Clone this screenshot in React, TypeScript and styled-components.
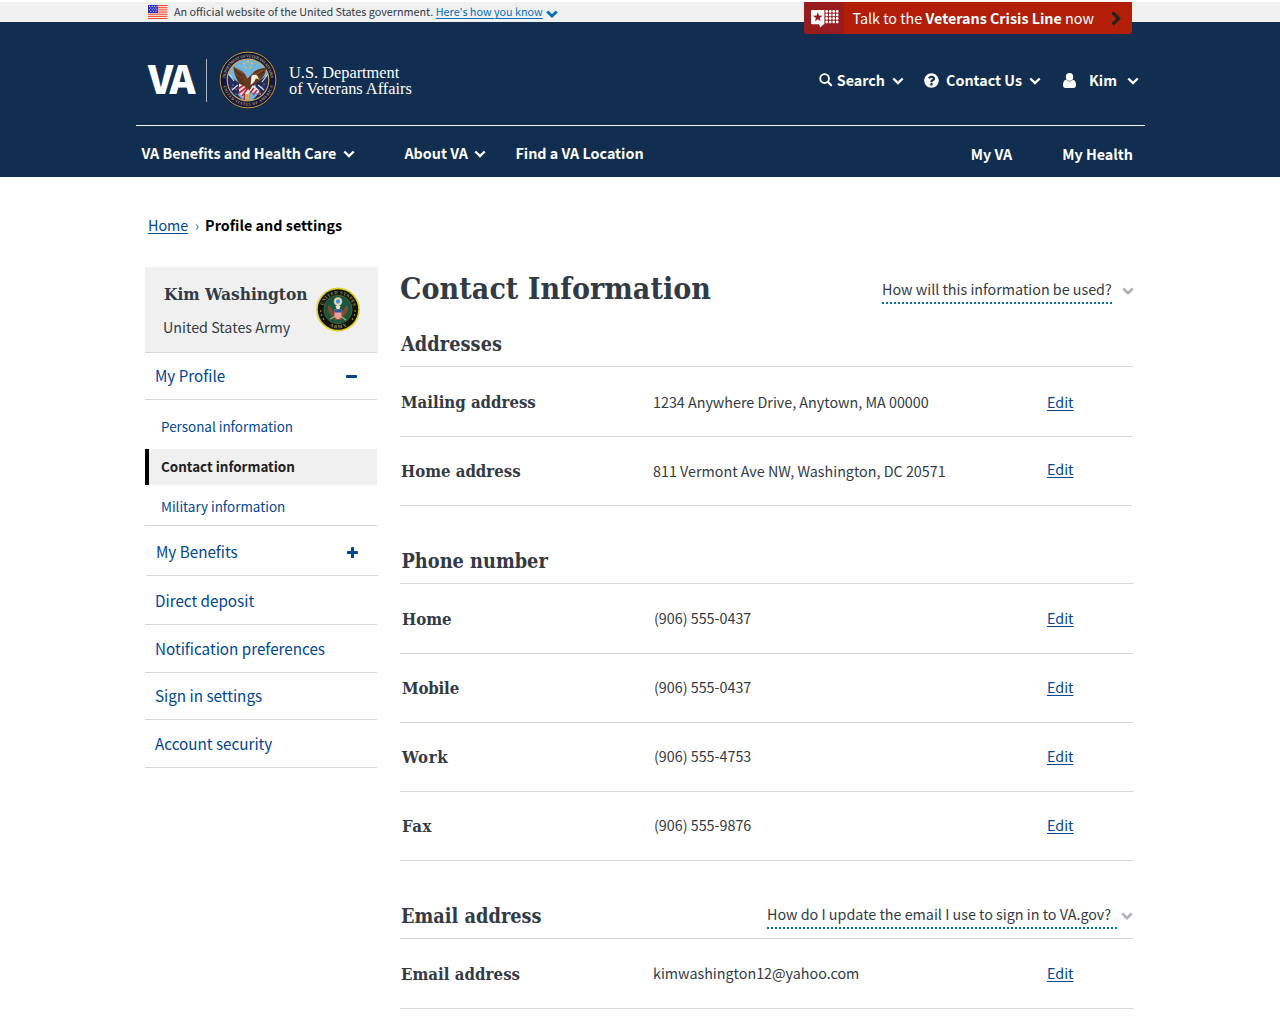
import React from 'react';
import styled, { createGlobalStyle } from 'styled-components';
import { FaQuestionCircle } from 'react-icons/fa';

const SANS = '"Noto Sans CJK JP", "Open Sans", sans-serif';
const SLAB = '"DejaVu Serif Condensed", "DejaVu Serif", serif';
const NAVY = '#112e51';
const INK = '#323a45';
const LINK = '#004795';
const RULE = '#d6d7d9';

const GlobalStyle = createGlobalStyle`
  * { box-sizing: border-box; }
  body { margin: 0; background: #fff; color: ${INK}; font-family: ${SANS}; }
  a { color: inherit; text-decoration: none; }
  h1, h2, h3, p, ul, dl, dt, dd { margin: 0; padding: 0; list-style: none; }
  svg { display: block; flex: none; }
`;

const Page = styled.div`
  width: 1280px;
  height: 1026px;
  overflow: hidden;
  position: relative;
`;

/* ---------- government banner ---------- */

const GovBanner = styled.div`
  margin-top: 2px;
  height: 20px;
  padding-left: 148px;
  background: #f0f0f0;
  display: flex;
  align-items: flex-start;
`;

const FlagSlot = styled.span`
  margin: 3px 6px 0 0;
`;

const BannerText = styled.span`
  margin-top: 2px;
  font-size: 10.8px;
  line-height: 15px;
  white-space: pre;
`;

const BannerLink = styled.a`
  margin: 2px 3px 0 2.5px;
  color: #0071bb;
  font-size: 10.8px;
  line-height: 15px;
  text-decoration: underline;
  text-decoration-thickness: 1px;
  text-underline-offset: 2px;
`;

const BannerChevron = styled.span`
  margin-top: 7.5px;
`;

const CrisisLine = styled.a`
  position: absolute;
  left: 804px;
  top: 2px;
  width: 328px;
  height: 32px;
  display: flex;
  background: #b31e09;
  border-radius: 0 0 3px 3px;
  overflow: hidden;
  color: #fff;
  font-size: 14.32px;
  line-height: 21px;
`;

const CrisisIcon = styled.span`
  width: 40px;
  background: #981b1e;
  padding: 7px 0 0 7px;
`;

const CrisisText = styled.span`
  width: 267px;
  padding: 5px 0 0 8.5px;
  white-space: pre;
`;

const CrisisChevron = styled.span`
  padding-top: 9px;
`;

/* ---------- header ---------- */

const Header = styled.header`
  height: 155px;
  padding-left: 136px;
  background: ${NAVY};
  color: #fff;
`;

const HeaderTop = styled.div`
  width: 1009px;
  height: 104px;
  border-bottom: 1px solid #f4f6f8;
  display: flex;
  justify-content: space-between;
  align-items: flex-start;
`;

const Brand = styled.div`
  display: flex;
  align-items: flex-start;
  padding-left: 12px;
`;

const BrandMark = styled.span`
  width: 58px;
  margin-top: 26px;
  font-size: 39.4px;
  font-weight: 900;
  line-height: 57px;
  letter-spacing: -3px;
`;

const BrandDivider = styled.span`
  width: 1px;
  height: 43px;
  margin: 37px 12px 0 0;
  background: #a9b4c2;
`;

const SealSlot = styled.span`
  margin: 29px 12px 0 0;
`;

const BrandName = styled.span`
  margin-top: 43px;
  font-family: "Liberation Serif", serif;
  font-size: 16.35px;
  line-height: 16px;
  white-space: pre;
`;

const Tools = styled.div`
  display: flex;
  align-items: center;
  height: 21px;
  margin: 47px 6.5px 0 0;
  font-size: 14.32px;
  font-weight: 700;
  line-height: 21px;
`;

const Tool = styled.a<{ $lead: number }>`
  display: flex;
  align-items: center;
  margin-left: ${(p) => p.$lead}px;
`;

const ToolLabel = styled.span<{ $left: number; $right: number }>`
  margin: 0 ${(p) => p.$right}px 0 ${(p) => p.$left}px;
`;

const Lowered = styled.span<{ $by: number }>`
  padding-top: ${(p) => p.$by}px;
`;

const Nav = styled.nav`
  width: 997px;
  display: flex;
  align-items: flex-start;
  padding-left: 5.4px;
  font-size: 14.32px;
  font-weight: 700;
  line-height: 21px;
`;

const NavItem = styled.a<{ $gap: number; $top?: number }>`
  display: flex;
  align-items: center;
  gap: 6.5px;
  margin: ${(p) => p.$top ?? 16}px ${(p) => p.$gap}px 0 0;
`;

const NavSpacer = styled.span`
  flex: 1;
`;

/* ---------- breadcrumb ---------- */

const Breadcrumb = styled.nav`
  height: 90px;
  padding: 37px 0 0 148px;
  display: flex;
  align-items: flex-start;
  font-size: 14.32px;
  line-height: 21px;
`;

const UnderlinedLink = styled.a`
  color: ${LINK};
  text-decoration: underline;
  text-decoration-thickness: 1px;
  text-underline-offset: 2px;
`;

const CrumbMark = styled.span`
  margin: 0 6px 0 6.5px;
  color: #4773aa;
`;

const CrumbHere = styled.span`
  color: #000;
  font-weight: 700;
  letter-spacing: 0.03px;
`;

/* ---------- sidebar ---------- */

const Body = styled.div`
  display: flex;
  align-items: flex-start;
  padding-left: 145px;
`;

const Sidebar = styled.aside`
  width: 255px;
`;

const ProfileCard = styled.div`
  width: 233px;
  height: 85px;
  padding-left: 18px;
  background: #f0f0f0;
  display: flex;
  align-items: flex-start;
  justify-content: space-between;
`;

const ProfileText = styled.div`
  padding-top: 17px;
`;

const ProfileName = styled.h2`
  padding-left: 1px;
  font-family: ${SLAB};
  font-size: 17.2px;
  line-height: 20px;
  font-weight: 700;
  white-space: nowrap;
`;

const ProfileBranch = styled.p`
  margin-top: 12px;
  font-size: 14.32px;
  line-height: 21px;
`;

const ArmySlot = styled.span`
  margin: 20px 18px 0 0;
`;

const SideRow = styled.a<{ $h: number; $top: number; $shift?: number }>`
  display: flex;
  justify-content: space-between;
  align-items: flex-start;
  width: 232px;
  height: ${(p) => p.$h}px;
  margin-left: ${(p) => p.$shift ?? 0}px;
  padding: ${(p) => p.$top}px 20px 0 10px;
  border-bottom: 1px solid ${RULE};
  color: ${LINK};
  font-size: 15.22px;
  line-height: 22px;
`;

const CardRule = styled.div`
  width: 232px;
  height: 1px;
  background: ${RULE};
`;

const SubList = styled.ul`
  width: 232px;
  height: 126px;
  border-bottom: 1px solid ${RULE};
`;

const SubItem = styled.li<{ $h: number; $top: number; $active?: boolean }>`
  height: ${(p) => p.$h}px;
  padding: ${(p) => p.$top}px 0 0 12px;
  border-left: 4px solid ${(p) => (p.$active ? '#000' : 'transparent')};
  background: ${(p) => (p.$active ? '#f0f0f0' : 'none')};
  color: ${(p) => (p.$active ? '#212121' : LINK)};
  font-weight: ${(p) => (p.$active ? 700 : 400)};
  font-size: 13.43px;
  line-height: 20px;
`;

/* ---------- main column ---------- */

const Main = styled.main`
  width: 733px;
`;

const TitleRow = styled.div`
  display: flex;
  justify-content: space-between;
  align-items: flex-start;
  height: 60px;
`;

const Title = styled.h1`
  margin: 4px 0 0 0;
  font-family: ${SLAB};
  font-size: 30px;
  line-height: 35px;
  font-weight: 700;
  letter-spacing: 0.06px;
`;

const Help = styled.a<{ $top: number; $right: number }>`
  display: flex;
  align-items: flex-start;
  margin: ${(p) => p.$top}px ${(p) => p.$right}px 0 0;
`;

const HelpText = styled.span<{ $w: number; $gap: number }>`
  width: ${(p) => p.$w}px;
  margin-right: ${(p) => p.$gap}px;
  padding-bottom: 3px;
  border-bottom: 2px dotted #0071bb;
  font-size: 14.32px;
  line-height: 21px;
  white-space: nowrap;
`;

const Section = styled.section`
  & + & { margin-top: 38px; }
`;

const SectionHead = styled.div`
  display: flex;
  justify-content: space-between;
  align-items: flex-start;
  height: 40px;
  border-bottom: 1px solid ${RULE};
`;

const SectionTitle = styled.h2<{ $left: number; $track: number }>`
  margin: 5px 0 0 ${(p) => p.$left}px;
  font-family: ${SLAB};
  font-size: 19.75px;
  line-height: 24px;
  font-weight: 700;
  letter-spacing: ${(p) => p.$track}px;
`;

const Row = styled.dl<{ $h: number; $w: number }>`
  display: grid;
  grid-template-columns: 253px 394px auto;
  justify-content: start;
  align-items: start;
  width: ${(p) => p.$w}px;
  height: ${(p) => p.$h}px;
  border-bottom: 1px solid ${RULE};
`;

const RowLabel = styled.dt<{ $top: number; $left: number; $track: number }>`
  padding: ${(p) => p.$top}px 0 0 ${(p) => p.$left}px;
  font-family: ${SLAB};
  font-size: 16.65px;
  line-height: 20px;
  font-weight: 700;
  letter-spacing: ${(p) => p.$track}px;
`;

const RowCell = styled.dd<{ $top: number; $left?: number }>`
  padding: ${(p) => p.$top}px 0 0 ${(p) => p.$left ?? 0}px;
  font-size: 14.32px;
  line-height: 21px;
`;

/* ---------- drawings ---------- */

function Chevron({ color, stroke = 2.4 }: { color: string; stroke?: number }) {
  return (
    <svg width="12" height="8" viewBox="0 0 12 8" fill="none">
      <path d="M1.3 1.5 6 6.1l4.7-4.6" stroke={color} strokeWidth={stroke} />
    </svg>
  );
}

function UsFlag() {
  const stripes = [0, 2.15, 4.3, 6.45, 8.6, 10.75, 12.9];
  const stars = [
    [1.6, 1.4], [4.2, 1.4], [6.8, 1.4], [9, 1.4], [2.8, 3.1], [5.4, 3.1], [8, 3.1],
    [1.6, 4.8], [4.2, 4.8], [6.8, 4.8], [9, 4.8], [2.8, 6.5], [5.4, 6.5], [8, 6.5],
  ];
  return (
    <svg width="20" height="14" viewBox="0 0 20 14">
      <rect width="19.5" height="14" fill="#fff" />
      {stripes.map((y) => (
        <rect key={y} y={y} width="19.5" height="1.15" fill="#f0472a" />
      ))}
      <rect width="10" height="8" fill="#2a2fbd" />
      {stars.map(([x, y]) => (
        <circle key={`${x}-${y}`} cx={x} cy={y} r="0.55" fill="#e3e5fa" />
      ))}
    </svg>
  );
}

function CrisisMark() {
  return (
    <svg width="30" height="20" viewBox="0 0 30 20" fill="#fff">
      <path d="M1 1h12.400v14.200h-.6L9.200 18.600 8.200 15.200H1a1 1 0 0 1-1-1V2a1 1 0 0 1 1-1Z" />
      <path
        d="m6.800 3.300 1.200 3.300 3.500.1-2.800 2.200 1 3.400-2.900-2-2.900 2 1-3.400-2.800-2.200 3.500-.1Z"
        fill="#981b1e"
      />
      {[2.5, 6, 9.5, 13].map((y) =>
        [15.7, 19.2, 22.7, 26.2].map((x) => <circle key={`${x}-${y}`} cx={x} cy={y} r="1.4" />),
      )}
    </svg>
  );
}

function SearchGlass() {
  return (
    <svg width="14" height="14" viewBox="0 0 14 14" fill="none" stroke="#fff">
      <circle cx="5.600" cy="5.600" r="4.400" strokeWidth="1.800" />
      <path d="m8.800 8.800 3.300 3.400" strokeWidth="2.200" strokeLinecap="round" />
    </svg>
  );
}

function Person() {
  return (
    <svg width="13" height="15" viewBox="0 0 13 15" fill="#fff">
      <ellipse cx="6.5" cy="3.900" rx="3.700" ry="3.900" />
      <path d="M3 6.800C1 7.200 0 9.200 0 12c0 1.900 1 3 2.500 3h8c1.500 0 2.500-1.100 2.500-3 0-2.800-1-4.800-3-5.200a4.600 4.600 0 0 1-7 0Z" />
    </svg>
  );
}

function VaSeal() {
  return (
    <svg width="58" height="58" viewBox="0 0 58 58">
      <defs>
        <path id="va-top" d="M6.300 29a22.700 22.700 0 0 1 45.400 0" />
        <path id="va-bottom" d="M3.500 29a25.500 25.500 0 0 0 51 0" />
        <clipPath id="va-disc"><circle cx="29" cy="29" r="20.300" /></clipPath>
      </defs>
      <circle cx="29" cy="29" r="29" fill="#221c23" />
      <circle cx="29" cy="29" r="27.900" fill="#12163c" stroke="#c9a24c" strokeWidth="1" />
      <circle cx="29" cy="29" r="20.800" fill="#72b4dc" stroke="#c9a75c" strokeWidth="1.200" />
      <text fill="#b39d6c" fontFamily="Liberation Serif" fontWeight="700" fontSize="4">
        <textPath href="#va-top" textLength="67" startOffset="2">DEPARTMENT OF VETERANS AFFAIRS</textPath>
      </text>
      <text fill="#b39d6c" fontFamily="Liberation Serif" fontWeight="700" fontSize="4">
        <textPath href="#va-bottom" textLength="68" startOffset="6">UNITED STATES OF AMERICA</textPath>
      </text>
      <g clipPath="url(#va-disc)">
        <path d="M9 24 23 34 19 44l8 8-7-1C11 46 8 36 9 24Z" fill="#252c5c" />
        <path d="M49 24 36 32l3 11-7 8 7-1c9-5 12-15 10-26Z" fill="#252c5c" />
        <path d="m10 23 5 7m34-7-6 8M13 39l6-5m26 5-6-5" stroke="#dce5ee" strokeWidth="1.100" />
        <g fill="#dce5ee">
          {[[14, 34], [17, 38], [13, 37], [43, 36], [40, 39], [45, 33], [17, 43], [41, 43]].map(([x, y]) => (
            <circle key={`${x}-${y}`} cx={x} cy={y} r="0.600" />
          ))}
        </g>
        <path d="M20 33c4-2 12-1 19 5l3 6c-5-3-9-4-12-2l-4 6-6-6Z" fill="#f0e7e5" />
        <path d="m19 38 6-4m-5 8 8-6m-5 9 6-8m2 5 4-5m-1 7 4-5m1 5 2-3m-16 8 1-6m3 8 1-8" stroke="#bc263a" strokeWidth="1.700" />
        <path d="M26 43h5l-1 7h-2Z" fill="#d7ae4d" />
      </g>
      <path d="M14.500 15c2 3 8 3.500 11 7.500l3 5 5-5c4-5.500 10-4.500 14-6.500-1 5-2 10-6 12-2 3.500-5 5.500-8 6.500l-3 5-6-5c-4-1-6-3.500-7-7.500-2-3-3-7-3-12Z" fill="#67391f" />
      <path d="m16 20 7 5m-6 1 6 3.500m-3 1 5 3m20-13-8 5m6 1-7 3.500m4 1-6 3" stroke="#40231a" strokeWidth="0.900" />
      <path d="m18 18 6 4.500m20-3.500-8 5" stroke="#925b32" strokeWidth="0.900" />
      <path d="M32.500 25c2-1.800 5-1.500 6.200.3l1 3-3-.7c-.3 2.400-2.200 4.400-5.200 6.400Z" fill="#f5f2ea" />
      <path d="m37.500 26.300 3 1-.3 2-1.700-1.500Z" fill="#e6a62c" />
      <g fill="#e6c445">
        {[[25, 12.500], [29, 10.800], [33, 12.500], [26.500, 16.500], [31.500, 16.500]].map(([x, y]) => (
          <circle key={`${x}-${y}`} cx={x} cy={y} r="1" />
        ))}
      </g>
    </svg>
  );
}

function ArmySeal() {
  return (
    <svg width="44" height="45" viewBox="0 0 44 45">
      <defs>
        <path id="army-top" d="M6.500 22.500a15.500 15.500 0 0 1 31 0" />
        <path id="army-bottom" d="M3.200 22.500a18.800 18.800 0 0 0 37.600 0" />
      </defs>
      <circle cx="22" cy="22.500" r="21.900" fill="#e3cf22" />
      <circle cx="22" cy="22.500" r="20.200" fill="#0d120d" />
      <circle cx="22" cy="22.500" r="14.200" fill="#17563f" stroke="#6f662c" strokeWidth="0.700" />
      <text fill="#a89c42" fontFamily="Liberation Serif" fontWeight="700" fontSize="4.500">
        <textPath href="#army-top" textLength="41" startOffset="4">UNITED STATES</textPath>
      </text>
      <text fill="#a89c42" fontFamily="Liberation Serif" fontWeight="700" fontSize="4.800">
        <textPath href="#army-bottom" textLength="18" startOffset="20.500">ARMY</textPath>
      </text>
      <g fill="#c2b548">
        {[[4.800, 24], [5.600, 28], [7.500, 32], [39.200, 24], [38.400, 28], [36.500, 32]].map(([x, y]) => (
          <circle key={`${x}-${y}`} cx={x} cy={y} r="0.800" />
        ))}
      </g>
      <path d="M12 18c2 1 4 3 5.500 6h9c1.500-3 3.500-5 5.500-6 .5 5-1 10-5 12l-2 4-3-2-3 2-2-4c-4-2-5.500-7-5-12Z" fill="#7c4a2d" />
      <path d="m14 32 6-3m10 4-6-4" stroke="#a9bd76" strokeWidth="1.200" />
      <circle cx="22" cy="14.500" r="4" fill="#dfe6dc" stroke="#c2b548" strokeWidth="0.600" />
      <circle cx="22" cy="14.500" r="2.200" fill="#5b8ec9" />
      <path d="m19.500 19 2.500-1 2.500 1-1 3h-3Z" fill="#e9e3d4" />
      <path d="M18.500 22.500h7v6c0 2-1.500 3-3.500 4-2-1-3.500-2-3.500-4Z" fill="#ef9a9c" />
      <path d="M18.500 22.500h7v3h-7Z" fill="#2b57a5" />
    </svg>
  );
}

function Toggle({ open }: { open?: boolean }) {
  return (
    <svg width="11" height="11" viewBox="0 0 11 11" fill={LINK}>
      <rect y="4" width="11" height="3" rx="0.4" />
      {!open && <rect x="4" width="3" height="11" rx="0.400" />}
    </svg>
  );
}

/* ---------- content ---------- */

type Entry = {
  label: string;
  value: string;
  h: number;
  w?: number;
  tops: [number, number, number];
  left?: number;
  track?: number;
};

const addresses: Entry[] = [
  { label: 'Mailing address', value: '1234 Anywhere Drive, Anytown, MA 00000', h: 70, w: 732, tops: [25, 24, 24] },
  { label: 'Home address', value: '811 Vermont Ave NW, Washington, DC 20571', h: 69, w: 732, tops: [24, 23, 21] },
];

const phones: Entry[] = [
  { label: 'Home', value: '(906) 555-0437', h: 70, tops: [25, 23, 23], left: 1 },
  { label: 'Mobile', value: '(906) 555-0437', h: 69, tops: [24, 22, 22], left: 1, track: -0.15 },
  { label: 'Work', value: '(906) 555-4753', h: 69, tops: [24, 22, 22], left: 1, track: 0.6 },
  { label: 'Fax', value: '(906) 555-9876', h: 69, tops: [24, 22, 22], left: 1, track: 0.5 },
];

const emails: Entry[] = [
  { label: 'Email address', value: 'kimwashington12@yahoo.com', h: 70, tops: [25, 23, 23], track: 0.05 },
];

function Entries({ items }: { items: Entry[] }) {
  return (
    <>
      {items.map(({ label, value, h, w = 733, tops, left = 0, track = 0 }) => (
        <Row key={label} $h={h} $w={w}>
          <RowLabel $top={tops[0]} $left={left + 1} $track={track}>{label}</RowLabel>
          <RowCell $top={tops[1]} $left={left}>{value}</RowCell>
          <RowCell $top={tops[2]}>
            <UnderlinedLink href="#">Edit</UnderlinedLink>
          </RowCell>
        </Row>
      ))}
    </>
  );
}

export default function App() {
  return (
    <Page>
      <GlobalStyle />
      <GovBanner>
        <FlagSlot><UsFlag /></FlagSlot>
        <BannerText>An official website of the United States government.</BannerText>
        <BannerLink href="#">Here&apos;s how you know</BannerLink>
        <BannerChevron><Chevron color="#0071bb" stroke={2.8} /></BannerChevron>
      </GovBanner>
      <CrisisLine href="#">
        <CrisisIcon><CrisisMark /></CrisisIcon>
        <CrisisText>Talk to the <b>Veterans Crisis Line</b> now</CrisisText>
        <CrisisChevron>
          <svg width="10" height="15" viewBox="0 0 10 15" fill="none">
            <path d="m1.600 1.500 6 5.900-6 5.900" stroke="#212121" strokeWidth="3.200" />
          </svg>
        </CrisisChevron>
      </CrisisLine>

      <Header>
        <HeaderTop>
          <Brand>
            <BrandMark>VA</BrandMark>
            <BrandDivider />
            <SealSlot><VaSeal /></SealSlot>
            <BrandName>{'U.S. Department\nof Veterans Affairs'}</BrandName>
          </Brand>
          <Tools>
            <Tool href="#" $lead={0}>
              <Lowered $by={1}><SearchGlass /></Lowered>
              <ToolLabel $left={4} $right={7}>Search</ToolLabel>
              <Lowered $by={3}><Chevron color="#fff" /></Lowered>
            </Tool>
            <Tool href="#" $lead={20}>
              <Lowered $by={2}><FaQuestionCircle size={15} /></Lowered>
              <ToolLabel $left={7} $right={7}>Contact Us</ToolLabel>
              <Lowered $by={3}><Chevron color="#fff" /></Lowered>
            </Tool>
            <Tool href="#" $lead={22}>
              <Lowered $by={2}><Person /></Lowered>
              <ToolLabel $left={13} $right={9.5}>Kim</ToolLabel>
              <Lowered $by={3}><Chevron color="#fff" /></Lowered>
            </Tool>
          </Tools>
        </HeaderTop>
        <Nav>
          <NavItem href="#" $gap={49.5}>
            VA Benefits and Health Care
            <Lowered $by={3}><Chevron color="#fff" /></Lowered>
          </NavItem>
          <NavItem href="#" $gap={29}>
            About VA
            <Lowered $by={3}><Chevron color="#fff" /></Lowered>
          </NavItem>
          <NavItem href="#" $gap={0}>Find a VA Location</NavItem>
          <NavSpacer />
          <NavItem href="#" $gap={50} $top={17}>My VA</NavItem>
          <NavItem href="#" $gap={0} $top={17}>My Health</NavItem>
        </Nav>
      </Header>

      <Breadcrumb>
        <UnderlinedLink href="#">Home</UnderlinedLink>
        <CrumbMark>›</CrumbMark>
        <CrumbHere>Profile and settings</CrumbHere>
      </Breadcrumb>

      <Body>
        <Sidebar>
          <ProfileCard>
            <ProfileText>
              <ProfileName>Kim Washington</ProfileName>
              <ProfileBranch>United States Army</ProfileBranch>
            </ProfileText>
            <ArmySlot><ArmySeal /></ArmySlot>
          </ProfileCard>
          <CardRule />
          <SideRow href="#" $h={47} $top={11}>
            My Profile
            <Lowered $by={7}><Toggle open /></Lowered>
          </SideRow>
          <SubList>
            <SubItem $h={49} $top={16}>Personal information</SubItem>
            <SubItem $h={36} $top={7} $active>Contact information</SubItem>
            <SubItem $h={40} $top={11}>Military information</SubItem>
          </SubList>
          <SideRow href="#" $h={50} $top={14} $shift={1}>
            My Benefits
            <Lowered $by={7}><Toggle /></Lowered>
          </SideRow>
          <SideRow href="#" $h={49} $top={13}>Direct deposit</SideRow>
          <SideRow href="#" $h={48} $top={12}>Notification preferences</SideRow>
          <SideRow href="#" $h={47} $top={11}>Sign in settings</SideRow>
          <SideRow href="#" $h={48} $top={12}>Account security</SideRow>
        </Sidebar>

        <Main>
          <TitleRow>
            <Title>Contact Information</Title>
            <Help href="#" $top={11} $right={-1}>
              <HelpText $w={230} $gap={10}>How will this information be used?</HelpText>
              <Lowered $by={8.5}><Chevron color="#aeb0b5" stroke={2.6} /></Lowered>
            </Help>
          </TitleRow>
          <Section>
            <SectionHead>
              <SectionTitle $left={1} $track={0.05}>Addresses</SectionTitle>
            </SectionHead>
            <Entries items={addresses} />
          </Section>
          <Section>
            <SectionHead>
              <SectionTitle $left={1.5} $track={0}>Phone number</SectionTitle>
            </SectionHead>
            <Entries items={phones} />
          </Section>
          <Section>
            <SectionHead>
              <SectionTitle $left={1} $track={0}>Email address</SectionTitle>
              <Help href="#" $top={4} $right={0}>
                <HelpText $w={350} $gap={4}>How do I update the email I use to sign in to VA.gov?</HelpText>
                <Lowered $by={8.5}><Chevron color="#aeb0b5" stroke={2.6} /></Lowered>
              </Help>
            </SectionHead>
            <Entries items={emails} />
          </Section>
        </Main>
      </Body>
    </Page>
  );
}
